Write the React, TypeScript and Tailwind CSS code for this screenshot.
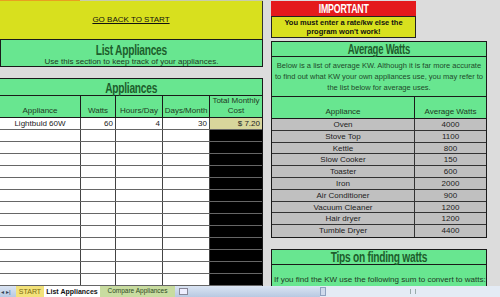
const cond = "inline-block scale-x-[0.68] font-['Liberation_Sans',sans-serif] font-bold leading-none tracking-tight";

const appliances = [
  ["Oven", "4000"],
  ["Stove Top", "1100"],
  ["Kettle", "800"],
  ["Slow Cooker", "150"],
  ["Toaster", "600"],
  ["Iron", "2000"],
  ["Air Conditioner", "900"],
  ["Vacuum Cleaner", "1200"],
  ["Hair dryer", "1200"],
  ["Tumble Dryer", "4400"],
];

const cols = ["w-[81px]", "w-[35px]", "w-[47px]", "w-[47px]", "w-[52px]"];

function ListRow({ cells, first }: { cells: string[]; first?: boolean }) {
  return (
    <div className="flex h-[12px] shrink-0 border-b border-[#666] text-[8px] leading-[11px] text-[#222]">
      <div className={`${cols[0]} border-r border-[#444] text-center`}>{cells[0]}</div>
      <div className={`${cols[1]} border-r border-[#444] pr-[2px] text-right`}>{cells[1]}</div>
      <div className={`${cols[2]} border-r border-[#444] pr-[2px] text-right`}>{cells[2]}</div>
      <div className={`${cols[3]} border-r border-[#444] pr-[2px] text-right`}>{cells[3]}</div>
      <div className={`${cols[4]} pr-[2px] text-right ${first ? "bg-[#d8d69c]" : "bg-black"}`}>{cells[4]}</div>
    </div>
  );
}

export default function App() {
  const empty = Array.from({ length: 13 }, () => ["", "", "", "", ""]);
  return (
    <div className="flex h-[297px] w-[500px] flex-col overflow-hidden bg-[#dcdcdc] font-['Liberation_Sans',sans-serif] text-[#111]">
      <div className="flex min-h-0 flex-1">
        {/* left side */}
        <div className="flex w-[263px] shrink-0 flex-col">
          <div className="flex h-[1px] shrink-0">
            <div className="w-[80px] bg-[#e8a020]" />
            <div className="flex-1 bg-[#c8ccaa]" />
          </div>
          <div className="flex h-[38px] shrink-0 items-center justify-center border-r border-[#333] bg-[#d8e01e] text-[8px] underline">
            GO BACK TO START
          </div>
          <div className="flex h-[28px] shrink-0 flex-col items-center border border-[#1a1a1a] bg-[#68e690] leading-none">
            <div className="mt-[2px] flex h-[15px] items-center text-[15px] text-[#1d5e2c]">
              <span className={cond}>List Appliances</span>
            </div>
            <div className="text-[8px] leading-[9px] text-[#1e3a24]">Use this section to keep track of your appliances.</div>
          </div>
          <div className="h-[11px] shrink-0" />
          <div className="flex min-h-0 flex-1 flex-col overflow-hidden border-t border-r border-[#1a1a1a] bg-white">
            <div className="flex h-[17px] shrink-0 items-center justify-center border-b border-[#1a1a1a] bg-[#68e690] text-[15px] text-[#1d5e2c]">
              <span className={cond}>Appliances</span>
            </div>
            <div className="flex h-[22px] shrink-0 border-b border-[#1a1a1a] bg-[#68e690] text-[8px] leading-[10px] text-[#1e3a24]">
              <div className={`${cols[0]} flex items-end justify-center border-r border-[#1a1a1a] pb-[1px]`}>Appliance</div>
              <div className={`${cols[1]} flex items-end justify-center border-r border-[#1a1a1a] pb-[1px]`}>Watts</div>
              <div className={`${cols[2]} flex items-end justify-center border-r border-[#1a1a1a] pb-[1px]`}>Hours/Day</div>
              <div className={`${cols[3]} flex items-end justify-center border-r border-[#1a1a1a] pb-[1px]`}>Days/Month</div>
              <div className={`${cols[4]} flex items-end justify-center pb-[1px] text-center`}>Total Monthly Cost</div>
            </div>
            <ListRow cells={["Lightbuld 60W", "60", "4", "30", "$ 7.20"]} first />
            {empty.map((c, i) => (
              <ListRow key={i} cells={c} />
            ))}
          </div>
        </div>

        <div className="w-[8px] shrink-0" />

        {/* right side */}
        <div className="flex w-[216px] shrink-0 flex-col">
          <div className="mt-[1px] w-[145px] shrink-0">
            <div className="flex h-[15px] items-center justify-center bg-[#e41a1c] text-[13px] text-white">
              <span className={cond}>IMPORTANT</span>
            </div>
            <div className="flex h-[22px] items-center justify-center border border-[#222] bg-[#d8e01e] px-2 text-center text-[7.5px] font-bold leading-[9px]">
              You must enter a rate/kw else the program won't work!
            </div>
          </div>
          <div className="h-[3px] shrink-0" />
          <div className="shrink-0 border border-[#1a1a1a] bg-[#68e690]">
            <div className="flex h-[15px] items-center justify-center border-b border-[#1a1a1a] text-[14px] text-[#1d5e2c]">
              <span className={cond}>Average Watts</span>
            </div>
            <div className="h-[39px] px-[2px] pt-[3px] text-center text-[7.5px] leading-[11px] text-[#1e4a2a]">
              Below is a list of average KW. Although it is far more accurate to find out what KW your own appliances use, you may refer to the list below for average uses.
            </div>
            <div className="flex h-[23px] border-y border-[#1a1a1a] text-[8px] leading-[10px] text-[#1e3a24]">
              <div className="flex w-[143px] items-end justify-center border-r border-[#1a1a1a] pb-[1px]">Appliance</div>
              <div className="flex flex-1 items-end justify-center pb-[1px]">Average Watts</div>
            </div>
            {appliances.map(([name, w]) => (
              <div key={name} className="flex h-[11.8px] border-b border-[#333] bg-[#c0c0c0] text-[8px] leading-[11px] text-[#222] last:border-b-0">
                <div className="w-[143px] border-r border-[#333] text-center">{name}</div>
                <div className="flex-1 text-center">{w}</div>
              </div>
            ))}
          </div>
          <div className="h-[11px] shrink-0" />
          <div className="min-h-0 flex-1 overflow-hidden border-x border-t border-[#1a1a1a] bg-[#68e690]">
            <div className="flex h-[15px] items-center justify-center border-b border-[#1a1a1a] text-[15px] text-[#1d5e2c]">
              <span className={cond}>Tips on finding watts</span>
            </div>
            <div className="whitespace-nowrap pl-[2px] pt-[10px] text-[8px] leading-[10px] text-[#1e3a24]">
              If you find the KW use the following sum to convert to watts:
            </div>
          </div>
        </div>
      </div>

      {/* sheet tabs */}
      <div className="flex h-[11px] shrink-0 items-center bg-gradient-to-b from-[#dbe5f3] to-[#b8c9e2] text-[7px] leading-none">
        <div className="flex w-[16px] items-center gap-[2px] pl-[1px] text-[6px] text-[#345]">
          <span>◂</span>
          <span>▸|</span>
        </div>
        <div className="flex h-full w-[28px] items-center justify-center bg-[#f3e27a] text-[#7a6a10]">START</div>
        <div className="flex h-full w-[56px] items-center justify-center bg-white font-bold">List Appliances</div>
        <div className="flex h-full w-[75px] items-center justify-center bg-[#c8dca0] text-[6.5px] text-[#2d4a1e]">Compare Appliances</div>
        <div className="ml-[4px] h-[7px] w-[9px] border border-[#889] bg-[#eef]" />
        <div className="ml-auto flex h-full w-[180px] items-center bg-[#e4ebf5]">
          <div className="h-[9px] w-[6px] border border-[#8fa2c0] bg-[#cfdaec]" />
          <div className="mx-auto h-[5px] w-[6px] border-x border-[#9aa]" />
        </div>
      </div>
    </div>
  );
}
